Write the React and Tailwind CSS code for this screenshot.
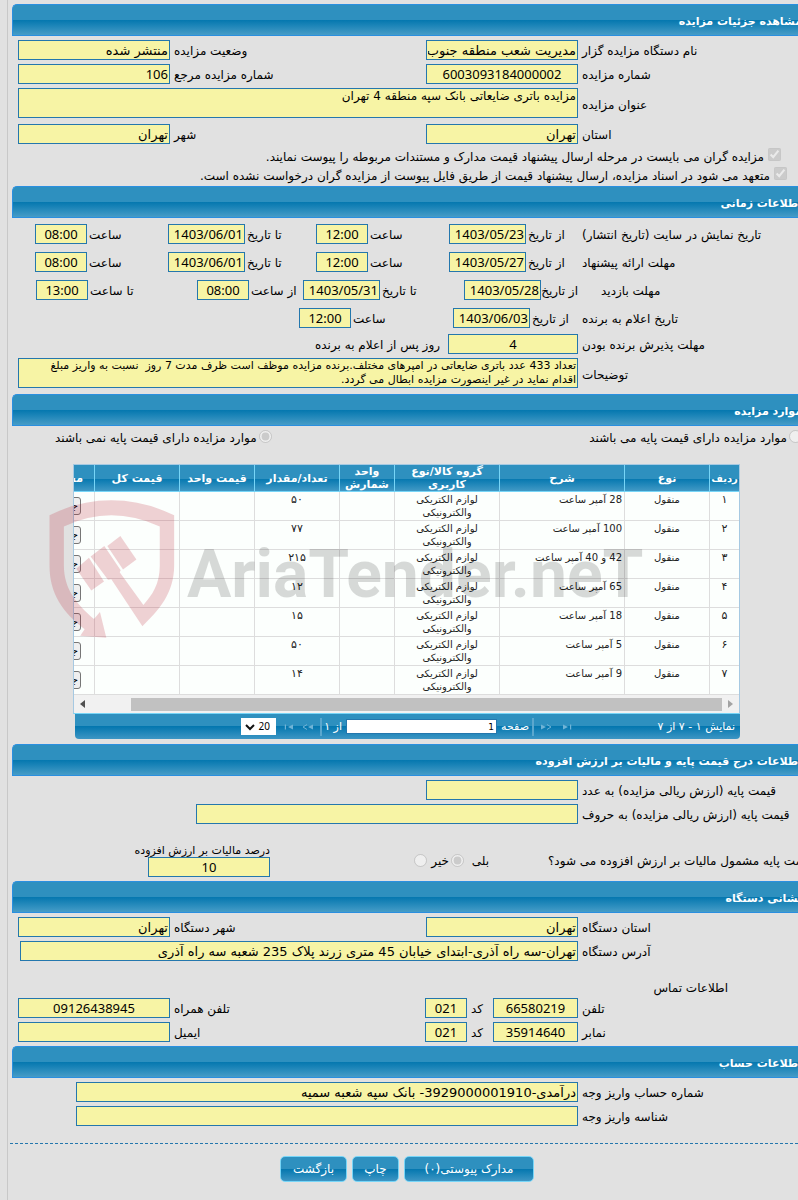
import React, { useId } from "react";

const FIELD =
  "h-5 border border-[#2477ad] bg-[#f7f4a5] px-px text-[13px] leading-4 text-black outline-none";

const NUMERIC = /^[\d/:]+$/;

function Field({ id, value = "", width, align = "text-right", label }) {
  const face = NUMERIC.test(value) ? "[font-family:'Noto_Sans',sans-serif]" : "";
  return (
    <input
      id={id}
      aria-label={label}
      readOnly
      defaultValue={value}
      className={`${FIELD} ${face} ${width} ${align}`}
    />
  );
}

function SectionTitle({ children }) {
  return (
    <header className="ml-3 h-8 overflow-hidden rounded-tl-[5px] border border-r-0 border-[#2a8fe0] bg-[linear-gradient(#2e90bf_0%,#2e90bf_50%,#0477af_50%,#469cc7_100%)]">
      <h2 className="-mr-1 pt-px text-[11px] leading-8 font-bold whitespace-nowrap text-white">
        {children}
      </h2>
    </header>
  );
}

/* Label column on the right, with its text set against the field. */
function Label({ htmlFor, children }) {
  return (
    <label
      htmlFor={htmlFor}
      className="w-[220px] shrink-0 pt-0.5 pl-1 text-left whitespace-nowrap"
    >
      {children}
    </label>
  );
}

function PairRow({ a, b, alignA, alignB, valueA, valueB }) {
  const id = useId();
  return (
    <div className="flex items-center pl-[18px]">
      <Label htmlFor={id + "a"}>{a}</Label>
      <Field id={id + "a"} value={valueA} width="w-[152px] shrink-0" align={alignA} />
      {b && (
        <>
          <label
            htmlFor={id + "b"}
            className="flex-1 pt-0.5 pl-1 text-left whitespace-nowrap"
          >
            {b}
          </label>
          <Field id={id + "b"} value={valueB} width="w-[152px] shrink-0" align={alignB} />
        </>
      )}
    </div>
  );
}

function WideRow({ label, value, pad = "pl-[18px]" }) {
  const id = useId();
  return (
    <div className={`flex items-center ${pad}`}>
      <Label htmlFor={id}>{label}</Label>
      <Field id={id} value={value} width="min-w-0 flex-1" />
    </div>
  );
}

function AreaRow({ label, value, size }) {
  const id = useId();
  return (
    <div className="flex items-center pl-[18px]">
      <div className="w-[220px] shrink-0 pt-1 pl-1 text-left">
        <label htmlFor={id}>{label}</label>
      </div>
      <textarea
        id={id}
        readOnly
        defaultValue={value}
        className={`block h-[30px] min-w-0 flex-1 resize-none overflow-hidden border border-[#2477ad] bg-[#f7f4a5] px-px leading-[14px] text-black outline-none ${size}`}
      />
    </div>
  );
}

const DATE = "w-[77px] shrink-0";
const TIME = "w-[52px] shrink-0";

function ScheduleRow({ title, pad, parts }) {
  return (
    <div className="flex items-center">
      <span className={`w-[220px] shrink-0 pt-0.5 text-left whitespace-nowrap ${pad}`}>
        {title}
      </span>
      {parts.map(([text, width, value, kind]) => (
        <React.Fragment key={text + width + value}>
          <span className={`shrink-0 pt-0.5 pl-0.5 text-left whitespace-nowrap ${width}`}>
            {text}
          </span>
          <Field
            label={`${title} ${text}`}
            value={value}
            width={kind === "date" ? DATE : TIME}
            align={kind === "date" ? "text-right" : "text-center"}
          />
        </React.Fragment>
      ))}
    </div>
  );
}

const ROWS = [
  ["۱", "28 آمپر ساعت", "۵۰"],
  ["۲", "100 آمپر ساعت", "۷۷"],
  ["۳", "42 و 40 آمپر ساعت", "۲۱۵"],
  ["۴", "65 آمپر ساعت", "۱۲"],
  ["۵", "18 آمپر ساعت", "۱۵"],
  ["۶", "5 آمپر ساعت", "۵۰"],
  ["۷", "9 آمپر ساعت", "۱۴"],
];

const TD = "border-b border-l border-[#dddddd] p-0 align-top leading-[13px]";
const TH =
  "border-b border-l border-[#77d5f7] p-0 text-center align-middle font-bold leading-[13px] whitespace-nowrap";

function ItemsTable() {
  return (
    <table className="w-[735px] table-fixed border-separate border-spacing-0 bg-[#fcfffd] text-[10px] text-[#222222]">
      <colgroup>
        <col className="w-[30px]" />
        <col className="w-[85px]" />
        <col className="w-[125px]" />
        <col className="w-[105px]" />
        <col className="w-[55px]" />
        <col className="w-[85px]" />
        <col className="w-[75px]" />
        <col className="w-[85px]" />
        <col className="w-[90px]" />
      </colgroup>
      <thead>
        <tr className="h-[27px] bg-[linear-gradient(#2e90bf_0%,#2e90bf_50%,#0477af_50%,#469cc7_100%)] text-[11px] text-white">
          <th className={`${TH} text-[10px]`}>ردیف</th>
          <th className={TH}>نوع</th>
          <th className={TH}>شرح</th>
          <th className={TH}>
            گروه کالا/نوع
            <br />
            کاربری
          </th>
          <th className={TH}>
            واحد
            <br />
            شمارش
          </th>
          <th className={TH}>تعداد/مقدار</th>
          <th className={TH}>قیمت واحد</th>
          <th className={TH}>قیمت کل</th>
          <th className={`${TH} pr-[11px] text-right`}>مستندات</th>
        </tr>
      </thead>
      <tbody>
        {ROWS.map(([n, desc, qty]) => (
          <tr key={n} className="h-[29px]">
            <td className={`${TD} pt-px text-center text-[11px]`}>{n}</td>
            <td className={`${TD} pt-px text-center`}>منقول</td>
            <td className={`${TD} pt-px pr-0.5 text-right`}>{desc}</td>
            <td className={`${TD} pt-px text-center`}>
              لوازم الکتریکی
              <br />
              والکترونیکی
            </td>
            <td className={TD} />
            <td className={`${TD} pt-px text-center text-[11px]`}>{qty}</td>
            <td className={TD} />
            <td className={TD} />
            <td className={`${TD} pt-[5px] pr-[13px]`}>
              <button
                type="button"
                className="block h-[18px] rounded-[3px] border border-[#767676] bg-[#efefef] px-0.5 text-[11px] leading-4 text-black"
              >
                جزئیات
              </button>
            </td>
          </tr>
        ))}
      </tbody>
    </table>
  );
}

function PagerArrow({ double, flip, label }) {
  return (
    <button type="button" aria-label={label} disabled className="text-[#6fb3d6]">
      <svg
        width="12"
        height="8"
        viewBox="0 0 12 8"
        className={flip ? "block -scale-x-100" : "block"}
        fill="currentColor"
      >
        <path d="M1 1.5 6 4 1 6.5Z" />
        {double ? (
          <path d="M7 1.5 11 4 7 6.5" fill="none" stroke="currentColor" />
        ) : (
          <path d="M8 1.5h1.2v5H8Z" />
        )}
      </svg>
    </button>
  );
}

function Pager() {
  return (
    <div className="ml-0.5 flex h-[25px] items-center rounded-b-[4px] bg-[linear-gradient(#2e90bf_0%,#2e90bf_50%,#0477af_50%,#3d96c4_100%)] pr-[5px] text-[11px] text-white">
      <span className="w-[161px] shrink-0">نمایش ۱ - ۷ از ۷</span>
      <PagerArrow label="صفحه اول" />
      <span className="w-2.5" />
      <PagerArrow label="صفحه قبل" double />
      <span className="mr-1.5 ml-[3px] h-[18px] w-0.5 bg-[#5ba7ce]" />
      <label htmlFor="page" className="w-7 shrink-0 whitespace-nowrap">
        صفحه
      </label>
      <input
        id="page"
        defaultValue="1"
        className="mr-1 h-[15px] w-[151px] border border-[#2477ad] bg-white px-0.5 text-right text-[9px] text-black"
      />
      <span className="w-[22px] shrink-0 pr-1 whitespace-nowrap">از ۱</span>
      <span className="mr-0.5 ml-1.5 h-[18px] w-0.5 bg-[#5ba7ce]" />
      <PagerArrow label="صفحه بعد" double flip />
      <span className="w-2" />
      <PagerArrow label="صفحه آخر" flip />
      <div className="relative mr-1.5 h-[17px] w-[35px]">
        <select
          aria-label="تعداد در صفحه"
          className="block h-full w-full appearance-none bg-white pr-1.5 text-[10px] leading-[17px] text-black [font-family:'Noto_Sans',sans-serif]"
        >
          <option>20</option>
        </select>
        <svg
          width="10"
          height="7"
          viewBox="0 0 10 7"
          className="pointer-events-none absolute top-1.5 left-1"
          fill="none"
          stroke="#111"
          strokeWidth="2"
        >
          <path d="M1 1 5 5 9 1" />
        </svg>
      </div>
    </div>
  );
}

function ScrollTrack() {
  return (
    <div className="flex h-[18px] items-center bg-[#f1f1f1] px-1.5" aria-hidden="true">
      <svg width="5" height="8" viewBox="0 0 5 8" className="fill-[#a3a3a3]">
        <path d="M0 0 5 4 0 8Z" />
      </svg>
      <span className="mr-1.5 ml-[46px] h-[13px] flex-1 bg-[#c1c1c1]" />
      <svg width="5" height="8" viewBox="0 0 5 8" className="fill-[#505050]">
        <path d="M5 0 0 4 5 8Z" />
      </svg>
    </div>
  );
}

function Watermark() {
  return (
    <div
      dir="ltr"
      className="pointer-events-none absolute top-9 -left-6 flex items-center"
      aria-hidden="true"
    >
      <svg width="126" height="138" viewBox="29 134 376 413" className="shrink-0">
        <g fill="#be2638" fillOpacity="0.21">
          <path d="M30 180Q118 135 215 135T403 180V330C403 415 355 465 308 512L215 371 205 373 153 303 194 272 243 344 240 350 311 448C338 418 360 385 360 330V213Q285 180 215 180T73 213V330C73 400 110 445 163 490L181 469 200 546 122 540 135 521C70 470 30 415 30 330Z" />
          <path d="M203 272 242 242 290 312 250 342Z" />
          <path d="M110 340 148 307 193 378 155 405Z" />
        </g>
      </svg>
      <span className="ml-3 pt-3 text-[66px] leading-[80px] font-bold whitespace-nowrap text-black/15 [font-family:Roboto,sans-serif]">
        AriaTender.neT
      </span>
    </div>
  );
}

const ACTION =
  "h-[26px] rounded-[5px] border border-[#77d5f7] bg-[linear-gradient(#2e90bf_0%,#2e90bf_50%,#0477af_50%,#3d96c4_100%)] text-center text-xs leading-6 text-white";

export default function App() {
  return (
    <div
      dir="rtl"
      className="min-h-screen overflow-hidden bg-[#e1e1e1] text-xs leading-4 text-black [font-family:'DejaVu_Sans',sans-serif]"
    >
      <main className="bg-[linear-gradient(#c8c8c8,#c8c8c8)] bg-[length:1px_100%] bg-[position:7px_0] bg-no-repeat pt-1 pb-[18px]">
        <section>
          <SectionTitle>مشاهده جزئیات مزایده</SectionTitle>
          <div className="flex flex-col gap-1 pt-1">
            <PairRow
              a="نام دستگاه مزایده گزار"
              valueA="مدیریت شعب منطقه جنوب"
              b="وضعیت مزایده"
              valueB="منتشر شده"
            />
            <PairRow
              a="شماره مزایده"
              valueA="6003093184000002"
              alignA="text-center"
              b="شماره مزایده مرجع"
              valueB="106"
            />
            <AreaRow
              label="عنوان مزایده"
              value="مزایده باتری ضایعاتی بانک سپه منطقه 4 تهران"
              size="text-xs"
            />
            <div className="pt-0.5">
              <PairRow a="استان" valueA="تهران" b="شهر" valueB="تهران" />
            </div>
          </div>
          <div className="flex flex-col gap-0.5 pt-1 pb-[3px]">
            <label className="flex items-start gap-1 pr-[17px]">
              <input type="checkbox" disabled defaultChecked className="size-[13px] shrink-0" />
              <span className="pt-px">
                مزایده گران می بایست در مرحله ارسال پیشنهاد قیمت مدارک و مستندات مربوطه را پیوست نمایند.
              </span>
            </label>
            <label className="flex h-4 items-start gap-1 pr-[11px]">
              <input type="checkbox" disabled defaultChecked className="size-[13px] shrink-0" />
              <span className="pt-px">
                متعهد می شود در اسناد مزایده، ارسال پیشنهاد قیمت از طریق فایل پیوست از مزایده گران درخواست نشده است.
              </span>
            </label>
          </div>
        </section>

        <section>
          <SectionTitle>اطلاعات زمانی</SectionTitle>
          <div className="flex flex-col gap-2 pt-1.5">
            <ScheduleRow
              title="تاریخ نمایش در سایت (تاریخ انتشار)"
              pad="pl-1"
              parts={[
                ["از تاریخ", "w-[52px]", "1403/05/23", "date"],
                ["ساعت", "w-[81px]", "12:00", "time"],
                ["تا تاریخ", "w-[71px]", "1403/06/01", "date"],
                ["ساعت", "w-[81px]", "08:00", "time"],
              ]}
            />
            <ScheduleRow
              title="مهلت ارائه پیشنهاد"
              pad="pl-1"
              parts={[
                ["از تاریخ", "w-[52px]", "1403/05/27", "date"],
                ["ساعت", "w-[81px]", "12:00", "time"],
                ["تا تاریخ", "w-[71px]", "1403/06/01", "date"],
                ["ساعت", "w-[81px]", "08:00", "time"],
              ]}
            />
            <ScheduleRow
              title="مهلت بازدید"
              pad="pl-[23px]"
              parts={[
                ["از تاریخ", "w-[37px]", "1403/05/28", "date"],
                ["تا تاریخ", "w-[84px]", "1403/05/31", "date"],
                ["از ساعت", "w-[54px]", "08:00", "time"],
                ["تا ساعت", "w-[109px]", "13:00", "time"],
              ]}
            />
            <ScheduleRow
              title="تاریخ اعلام به برنده"
              pad="pl-1"
              parts={[
                ["از تاریخ", "w-[48px]", "1403/06/03", "date"],
                ["ساعت", "w-[102px]", "12:00", "time"],
              ]}
            />
          </div>
          <div className="flex flex-col gap-1 pt-1.5 pb-1.5">
            <div className="flex items-center">
              <Label htmlFor="accept">مهلت پذیرش برنده بودن</Label>
              <Field id="accept" value="4" width="w-[130px] shrink-0" align="text-center" />
              <span className="pt-0.5 pr-2">روز پس از اعلام به برنده</span>
            </div>
            <AreaRow
              label="توضیحات"
              size="text-[11px]"
              value={
                "تعداد 433 عدد باتری ضایعاتی در امپرهای مختلف.برنده مزایده موظف است ظرف مدت 7 روز  نسبت به واریز مبلغ\nاقدام نماید در غیر اینصورت مزایده ابطال می گردد."
              }
            />
          </div>
        </section>

        <section>
          <SectionTitle>موارد مزایده</SectionTitle>
          <div className="-mr-1 flex h-[38px] items-start pt-1">
            <label className="flex items-start gap-0.5">
              <input type="radio" name="base" disabled className="size-[13px]" />
              <span>موارد مزایده دارای قیمت پایه می باشند</span>
            </label>
            <label className="mr-auto ml-[55px] flex items-start gap-0.5">
              <input type="radio" name="base" disabled defaultChecked className="size-[13px]" />
              <span>موارد مزایده دارای قیمت پایه نمی باشند</span>
            </label>
          </div>
          <div className="relative mr-[58px] mb-[5px] ml-[73px]">
            <div className="overflow-hidden border border-[#a6c9e2] border-b-[#77d5f7]">
              <ItemsTable />
              <ScrollTrack />
            </div>
            <Pager />
            <Watermark />
          </div>
        </section>

        <section>
          <SectionTitle>اطلاعات درج قیمت پایه و مالیات بر ارزش افزوده</SectionTitle>
          <div className="flex flex-col gap-1 pt-1">
            <PairRow a="قیمت پایه (ارزش ریالی مزایده) به عدد" />
            <WideRow label="قیمت پایه (ارزش ریالی مزایده) به حروف" pad="pl-[196px]" />
          </div>
          <div className="-mr-3.5 flex items-center pt-5 pb-1">
            <span className="w-[264px] shrink-0 text-left whitespace-nowrap">
              قیمت پایه مشمول مالیات بر ارزش افزوده می شود؟
            </span>
            <label className="mr-[59px] flex w-[38px] items-center justify-between">
              بلی
              <input type="radio" name="vat" disabled defaultChecked className="size-[13px]" />
            </label>
            <label className="mr-0.5 flex w-[35px] items-center justify-between">
              خیر
              <input type="radio" name="vat" disabled className="size-[13px]" />
            </label>
            <div className="mr-auto ml-[135px] flex w-[135px] flex-col">
              <label
                htmlFor="rate"
                className="h-[13px] text-[11px] leading-[14px] whitespace-nowrap"
              >
                درصد مالیات بر ارزش افزوده
              </label>
              <Field id="rate" value="10" width="w-[122px]" align="text-center" />
            </div>
          </div>
        </section>

        <section>
          <SectionTitle>نشانی دستگاه</SectionTitle>
          <div className="flex flex-col gap-1 pt-1">
            <PairRow a="استان دستگاه" valueA="تهران" b="شهر دستگاه" valueB="تهران" />
            <WideRow
              label="آدرس دستگاه"
              value="تهران-سه راه آذری-ابتدای خیابان 45 متری زرند پلاک 235 شعبه سه راه آذری"
              pad="pl-5"
            />
          </div>
          <h3 className="pt-[19px] pr-[70px] pb-0.5">اطلاعات تماس</h3>
          <div className="flex flex-col gap-1 pb-1">
            {[
              ["تلفن", "66580219", "تلفن همراه", "09126438945"],
              ["نمابر", "35914640", "ایمیل", ""],
            ].map(([a, number, b, other]) => (
              <div key={a} className="flex items-center pl-[18px]">
                <Label htmlFor={"n" + number}>{a}</Label>
                <Field id={"n" + number} value={number} width="w-[85px] shrink-0" align="text-center" />
                <label htmlFor={"c" + number} className="w-[26px] pt-0.5 pl-1 text-left">
                  کد
                </label>
                <Field id={"c" + number} value="021" width="w-[42px] shrink-0" align="text-center" />
                <label htmlFor={"o" + number} className="flex-1 pt-0.5 pl-1 text-left">
                  {b}
                </label>
                <Field id={"o" + number} value={other} width="w-[152px] shrink-0" align="text-center" />
              </div>
            ))}
          </div>
        </section>

        <section>
          <SectionTitle>اطلاعات حساب</SectionTitle>
          <div className="flex flex-col gap-1 pt-1">
            <WideRow
              label="شماره حساب واریز وجه"
              value="درآمدی-3929000001910- بانک سپه شعبه سمیه"
              pad="pl-[76px]"
            />
            <WideRow label="شناسه واریز وجه" pad="pl-[76px]" />
          </div>
        </section>

        <div className="mt-[17px] ml-2.5 border-t border-dashed border-[#2477ad]" />
        <div className="mt-3 mr-[264px] flex gap-[5px]">
          <button type="button" className={`${ACTION} w-[130px]`}>
            مدارک پیوستی(۰)
          </button>
          <button type="button" className={`${ACTION} w-[47px]`}>
            چاپ
          </button>
          <button type="button" className={`${ACTION} w-[67px]`}>
            بازگشت
          </button>
        </div>
      </main>
    </div>
  );
}
